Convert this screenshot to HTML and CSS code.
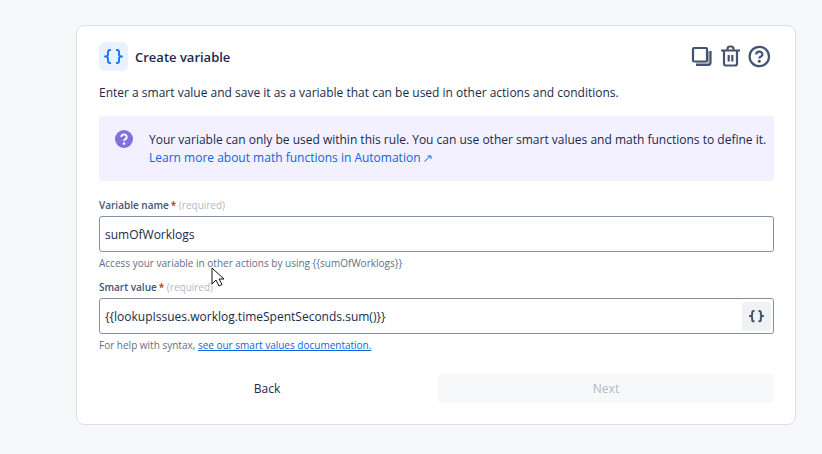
FILE: index.html
```
<!DOCTYPE html>
<html lang="en">
<head>
<meta charset="utf-8">
<title>Create variable</title>
<link rel="stylesheet" href="styles.css">
</head>
<body>
<main class="card">
  <header class="header">
    <span class="badge">
      <svg width="19" height="16" viewBox="0 0 19 16" fill="none" stroke="currentColor" stroke-width="2" stroke-linejoin="round" aria-hidden="true"><path d="M7 1H6Q4 1 4 3V5.500Q4 7.500 1 7.500Q4 7.500 4 9.500V12Q4 14 6 14H7M12 1h1Q15 1 15 3V5.500Q15 7.500 18 7.500Q15 7.500 15 9.500V12Q15 14 13 14H12"/></svg>
    </span>
    <h1 class="title">Create variable</h1>
    <div class="actions">
      <button class="icon-button" type="button" aria-label="Duplicate">
        <svg width="22" height="24" viewBox="0 0 22 24" fill="none" stroke="currentColor" stroke-width="2.200" stroke-linejoin="round" aria-hidden="true"><rect x="2" y="3" width="14" height="13.500" rx="1"/><path d="M19.500 6v11.500q0 2.500-2.500 2.500H5"/><path d="M17.800 6v12.200H5" stroke-width="1.500" opacity=".5"/></svg>
      </button>
      <button class="icon-button" type="button" aria-label="Delete">
        <svg width="22" height="24" viewBox="0 0 22 24" fill="none" stroke="currentColor" stroke-width="2.200" aria-hidden="true"><path d="M2 5.500h19M8.500 5V4q0-2.500 2.500-2.500h1q2.500 0 2.500 2.500v1M5 6.500v12q0 2 2 2h9q2 0 2-2v-12M9.700 10v6.500M13.300 10v6.500"/></svg>
      </button>
      <button class="icon-button" type="button" aria-label="Help">
        <svg width="24" height="24" viewBox="0 0 24 24" fill="none" stroke="currentColor" stroke-width="2.200" aria-hidden="true"><circle cx="12.300" cy="11.500" r="9.700"/><path d="M9.300 9.500a3 2.700 0 1 1 4.500 2.100Q12.300 12.300 12.300 13.600"/><circle cx="12.300" cy="16.200" r="1.500" fill="currentColor" stroke="none"/></svg>
      </button>
    </div>
  </header>

  <p class="description">Enter a smart value and save it as a variable that can be used in other actions and conditions.</p>

  <section class="notice">
    <svg class="notice-icon" width="18" height="18" viewBox="0 0 18 18" fill="none" aria-hidden="true"><circle cx="9" cy="9" r="9" fill="#8270db"/><path d="M6.300 7a2.700 2.500 0 1 1 4 2.100Q9 9.800 9 11" stroke="#f3f0ff" stroke-width="2"/><circle cx="9" cy="13.600" r="1.300" fill="#f3f0ff"/></svg>
    <p class="notice-text">Your variable can only be used within this rule. You can use other smart values and math functions to define it.<br>
      <a class="notice-link" href="#math">Learn more about math functions in Automation <svg width="8" height="7" viewBox="0 0 8 7" fill="none" stroke="currentColor" aria-hidden="true"><path d="M.500 6.500L6.500 1M3.500 1h3.500v3"/></svg></a></p>
  </section>

  <form class="form">
    <div class="field">
      <label class="label" for="name">Variable name<span class="star">*</span> <span class="required">(required)</span></label>
      <div class="control"><input class="input" id="name" type="text" value="sumOfWorklogs"></div>
      <p class="help">Access your variable in other actions by using {{sumOfWorklogs}}</p>
      <svg class="pointer" width="14" height="21" viewBox="0 0 14 21" aria-hidden="true"><path d="M1 1v16l4-4 3 6 3-1.500L8 12h5z" fill="#fff" stroke="#101020"/></svg>
    </div>
    <div class="field">
      <label class="label" for="value">Smart value<span class="star">*</span> <span class="required">(required)</span></label>
      <div class="control">
        <input class="input" id="value" type="text" value="{{lookupIssues.worklog.timeSpentSeconds.sum()}}">
        <button class="insert" type="button" aria-label="Insert smart value">
          <svg width="15" height="13" viewBox="0 0 19 16" fill="none" stroke="currentColor" stroke-width="2.500" stroke-linejoin="round" aria-hidden="true"><path d="M7 1H6Q4 1 4 3V5.500Q4 7.500 1 7.500Q4 7.500 4 9.500V12Q4 14 6 14H7M12 1h1Q15 1 15 3V5.500Q15 7.500 18 7.500Q15 7.500 15 9.500V12Q15 14 13 14H12"/></svg>
        </button>
      </div>
      <p class="help">For help with syntax, <a class="help-link" href="#docs">see our smart values documentation.</a></p>
    </div>
    <div class="footer">
      <button class="button" type="button">Back</button>
      <button class="button button-next" type="submit" disabled>Next</button>
    </div>
  </form>
</main>
</body>
</html>
```
FILE: styles.css
```
* {
  box-sizing: border-box;
}

body {
  margin: 0;
  padding: 25px 26px 25px 76px;
  background: #f7f8f9;
  color: #172b4d;
  font: 12px/18px "Segoe UI", "Open Sans", "Noto Sans", sans-serif;
}

h1,
p {
  margin: 0;
}

button,
input {
  font: inherit;
  color: inherit;
}

button {
  padding: 0;
  border: 0;
  background: none;
}

svg {
  flex: none;
}

.card {
  padding: 16px 21px 21px 22px;
  border: 1px solid #dcdfe4;
  border-radius: 8px;
  background: #fff;
}

.header {
  display: flex;
  align-items: center;
  gap: 7px;
}

.badge {
  display: flex;
  align-items: center;
  justify-content: center;
  width: 29px;
  height: 29px;
  border-radius: 6px;
  background: #e9f2ff;
  color: #1d7afc;
}

.title {
  font-size: 13px;
  line-height: 18px;
  font-weight: 600;
}

.actions {
  display: flex;
  gap: 6px;
  margin-left: auto;
  padding-right: 3px;
  color: #44546f;
}

.icon-button {
  display: flex;
}

.description {
  margin: 13px 0 14px;
}

.notice {
  display: flex;
  gap: 16px;
  padding: 14px 8px 14px 16px;
  border-radius: 3px;
  background: #f3f0ff;
}

.notice-text {
  padding-top: 1px;
  white-space: nowrap;
}

.notice-link {
  color: #0c66e4;
  text-decoration: none;
}

.form {
  padding-top: 16px;
}

.field {
  position: relative;
  margin-bottom: 8px;
}

.label {
  display: block;
  margin-bottom: 3px;
  color: #44546f;
  font-size: 10px;
  line-height: 16px;
  font-weight: 600;
}

.star {
  padding-left: 2px;
  color: #ae2e24;
}

.required {
  color: #b3b9c4;
  font-weight: 400;
}

.control {
  display: flex;
  align-items: center;
  height: 36px;
  padding-right: 2px;
  border: 1px solid #8590a2;
  border-radius: 3px;
}

.input {
  flex: 1;
  min-width: 0;
  height: 34px;
  padding: 0 5px;
  border: 0;
  outline: 0;
  background: none;
}

.insert {
  display: flex;
  align-items: center;
  justify-content: center;
  width: 29px;
  height: 29px;
  border-radius: 3px;
  background: #f1f2f4;
  color: #44546f;
}

.help {
  margin-top: 3px;
  color: #626f86;
  font-size: 10px;
  line-height: 16px;
}

.help-link {
  color: #0c66e4;
}

.pointer {
  position: absolute;
  top: 70px;
  left: 112px;
  z-index: 1;
}

.footer {
  display: grid;
  grid-template-columns: 1fr 1fr;
  gap: 3px;
  padding-top: 13px;
}

.button {
  height: 29px;
  border-radius: 3px;
  font-weight: 500;
}

.button-next {
  background: #f7f8f9;
  color: #b3b9c4;
}
```
